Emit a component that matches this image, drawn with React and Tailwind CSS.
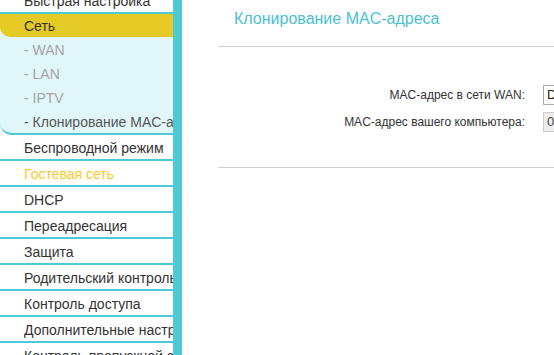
export default function App() {
  const font = { fontFamily: '"Liberation Sans", Arial, sans-serif' };
  const rows = [
    { t: "Беспроводной режим" },
    { t: "Гостевая сеть", c: "text-[#f7c92b]" },
    { t: "DHCP" },
    { t: "Переадресация" },
    { t: "Защита" },
    { t: "Родительский контроль" },
    { t: "Контроль доступа" },
    { t: "Дополнительные настройки" },
    { t: "Контроль пропускной способности" },
  ];
  return (
    <div className="w-[554px] h-[355px] overflow-hidden bg-white flex" style={font}>
      <div className="w-[173px] shrink-0 flex flex-col overflow-hidden">
        <div className="-mt-[12px] h-[24px] shrink-0 flex items-center pl-[24px] pt-[2px] text-[14px] text-[#333] whitespace-nowrap overflow-hidden">
          Быстрая настройка
        </div>
        <div className="h-[2px] shrink-0 bg-[#4ecad6]" />
        <div className="bg-[#e1f6f9] rounded-bl-[12px] border-b-2 border-[#4ecad6] shrink-0">
          <div className="h-[23px] bg-[#e5c924] rounded-bl-[10px] flex items-center pl-[24px] pt-[2px] text-[14px] text-[#333]">
            Сеть
          </div>
          <div className="h-[24px] flex items-center pl-[24px] pt-[2px] text-[14px] text-[#a3a3a3]">- WAN</div>
          <div className="h-[24px] flex items-center pl-[24px] pt-[2px] text-[14px] text-[#a3a3a3]">- LAN</div>
          <div className="h-[24px] flex items-center pl-[24px] pt-[2px] text-[14px] text-[#a3a3a3]">- IPTV</div>
          <div className="h-[24px] flex items-center pl-[24px] pt-[2px] text-[14px] text-[#555] whitespace-nowrap overflow-hidden">
            - Клонирование MAC-адреса
          </div>
        </div>
        {rows.map((r, i) => (
          <div key={i} className="shrink-0">
            {i > 0 && <div className="h-[2px] bg-[#4ecad6]" />}
            <div
              className={`h-[24px] flex items-center pl-[24px] pt-[2px] text-[14px] whitespace-nowrap overflow-hidden ${r.c || "text-[#333]"}`}
            >
              {r.t}
            </div>
          </div>
        ))}
      </div>
      <div className="w-[9px] shrink-0 bg-[#4ecad6]" />
      <div className="flex-1 min-w-0 pl-[36px] flex flex-col overflow-hidden">
        <div className="h-[37px] pl-[16px] pt-[1px] flex items-center text-[16px] text-[#4cbfd0] whitespace-nowrap">
          Клонирование MAC-адреса
        </div>
        <div className="h-[10px] border-b border-[#cfcfcf]" />
        <div className="pt-[38px] flex flex-col gap-[7px]">
          <div className="h-[20px] flex items-center">
            <div className="w-[307px] shrink-0 text-right text-[12px] text-[#333] whitespace-nowrap">MAC-адрес в сети WAN:</div>
            <div className="ml-[18px] h-[20px] w-[120px] border border-[#aaa] bg-white text-[13px] text-[#222] flex items-center pl-[3px] shrink-0 whitespace-nowrap overflow-hidden">
              D4-6E-0E-11-22-33
            </div>
          </div>
          <div className="h-[20px] flex items-center">
            <div className="w-[307px] shrink-0 text-right text-[12px] text-[#333] whitespace-nowrap">MAC-адрес вашего компьютера:</div>
            <div className="ml-[18px] h-[20px] w-[120px] border border-[#ccc] bg-[#eee] text-[13px] text-[#444] flex items-center pl-[3px] shrink-0 whitespace-nowrap overflow-hidden">
              00-1A-2B-3C-4D-5E
            </div>
          </div>
        </div>
        <div className="mt-[35px] border-b border-[#cfcfcf]" />
      </div>
    </div>
  );
}
